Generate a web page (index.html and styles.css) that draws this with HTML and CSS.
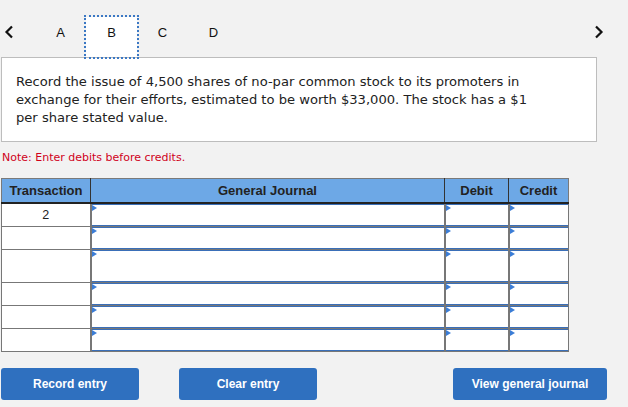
FILE: index.html
```html
<!DOCTYPE html>
<html>
<head>
<meta charset="utf-8">
<link rel="stylesheet" href="styles.css">
</head>
<body>
<div class="page">
  <div class="tabbar">
    <svg class="chev" width="10" height="14" viewBox="0 0 10 14"><path d="M8 1.5 L2.5 7 L8 12.5" fill="none" stroke="#111" stroke-width="2.2"/></svg>
    <div class="tabs">
      <div class="tab">A</div>
      <div class="tab active">B</div>
      <div class="tab">C</div>
      <div class="tab">D</div>
    </div>
    <svg class="chev right" width="10" height="14" viewBox="0 0 10 14"><path d="M2 1.5 L7.5 7 L2 12.5" fill="none" stroke="#111" stroke-width="2.2"/></svg>
  </div>
  <div class="question">Record the issue of 4,500 shares of no-par common stock to its promoters in exchange for their efforts, estimated to be worth $33,000. The stock has a $1 per share stated value.</div>
  <div class="note">Note: Enter debits before credits.</div>
  <table class="journal">
    <colgroup><col class="c1"><col class="c2"><col class="c3"><col class="c4"></colgroup>
    <thead>
      <tr><th>Transaction</th><th>General Journal</th><th>Debit</th><th>Credit</th></tr>
    </thead>
    <tbody>
      <tr><td class="tx">2</td><td><div class="inp"></div></td><td><div class="inp"></div></td><td><div class="inp"></div></td></tr>
      <tr><td class="tx"></td><td><div class="inp"></div></td><td><div class="inp"></div></td><td><div class="inp"></div></td></tr>
      <tr class="tall"><td class="tx"></td><td><div class="inp"></div></td><td><div class="inp"></div></td><td><div class="inp"></div></td></tr>
      <tr><td class="tx"></td><td><div class="inp"></div></td><td><div class="inp"></div></td><td><div class="inp"></div></td></tr>
      <tr><td class="tx"></td><td><div class="inp"></div></td><td><div class="inp"></div></td><td><div class="inp"></div></td></tr>
      <tr><td class="tx"></td><td><div class="inp"></div></td><td><div class="inp"></div></td><td><div class="inp"></div></td></tr>
    </tbody>
  </table>
  <div class="buttons">
    <button class="btn rec">Record entry</button>
    <button class="btn clr">Clear entry</button>
    <button class="btn view">View general journal</button>
  </div>
</div>
</body>
</html>
```
FILE: styles.css
```css
html, body {
  margin: 0;
  padding: 0;
  background: #f2f2f2;
}
.page {
  width: 628px;
  height: 407px;
  overflow: hidden;
  padding-left: 1px;
  box-sizing: border-box;
  font-family: "Liberation Sans", Arial, sans-serif;
}
.tabbar {
  display: flex;
  align-items: center;
  height: 57px;
  padding-top: 7px;
  box-sizing: border-box;
  position: relative;
}
.chev {
  margin-left: 3px;
  flex: none;
}
.chev.right {
  margin-left: auto;
  margin-right: 24px;
}
.tabs {
  display: flex;
  margin-left: 21px;
  height: 40px;
  align-self: flex-end;
}
.tab {
  width: 51px;
  height: 40px;
  display: flex;
  align-items: center;
  justify-content: center;
  font-size: 13px;
  color: #111;
  padding-bottom: 10px;
  box-sizing: border-box;
}
.tab.active {
  background: #fff;
  outline: 2px dotted #3b78c4;
  position: relative;
  z-index: 2;
}
.question {
  width: 596px;
  height: 85px;
  box-sizing: border-box;
  background: #fff;
  border: 1px solid #bdbdbd;
  padding: 15px 50px 0 14px;
  font-family: "DejaVu Sans", Verdana, sans-serif;
  font-size: 13.1px;
  line-height: 18px;
  color: #222;
}
.note {
  font-family: "DejaVu Sans", Verdana, sans-serif;
  font-size: 11px;
  color: #d0011b;
  margin-top: 9px;
  height: 14px;
  line-height: 14px;
  padding-left: 1px;
}
.journal {
  margin-top: 13px;
  border-collapse: collapse;
  width: 568px;
  table-layout: fixed;
  border: 1px solid #7a7a7a;
}
.c1 { width: 89px; }
.c2 { width: 354px; }
.c3 { width: 64px; }
.c4 { width: 60px; }
.journal th {
  background: #6da8e6;
  height: 23px;
  font-size: 13px;
  font-weight: bold;
  color: #222;
  border-left: 1.5px solid #333;
  border-bottom: 2px solid #222;
  padding: 0;
}
.journal th:first-child { border-left: none; }
.journal td {
  background: #fff;
  border: 1px solid #777;
  padding: 0;
  height: 22px;
  vertical-align: top;
}
.journal tr.tall td { height: 32px; }
.journal td.tx {
  text-align: center;
  font-size: 12.5px;
  color: #222;
  vertical-align: middle;
  line-height: 14px;
}
.journal td:not(.tx) { border-left-width: 2px; }
.inp {
  height: 100%;
  box-sizing: border-box;
  border-top: 1px solid #3a6fb8;
  border-bottom: 1px solid #3a6fb8;
  position: relative;
}
.inp::before {
  content: "";
  position: absolute;
  left: 0;
  top: 0;
  border-left: 5px solid #3b7dd6;
  border-top: 3.5px solid transparent;
  border-bottom: 3.5px solid transparent;
}
.buttons {
  display: flex;
  margin-top: 16px;
}
.btn {
  height: 32px;
  background: #2f70bf;
  color: #fff;
  border: none;
  border-radius: 3px;
  font-family: "Liberation Sans", Arial, sans-serif;
  font-size: 12px;
  font-weight: bold;
  padding: 0;
}
.btn.rec { width: 138px; }
.btn.clr { width: 138px; margin-left: 40px; }
.btn.view { width: 154px; margin-left: 136px; }
```
